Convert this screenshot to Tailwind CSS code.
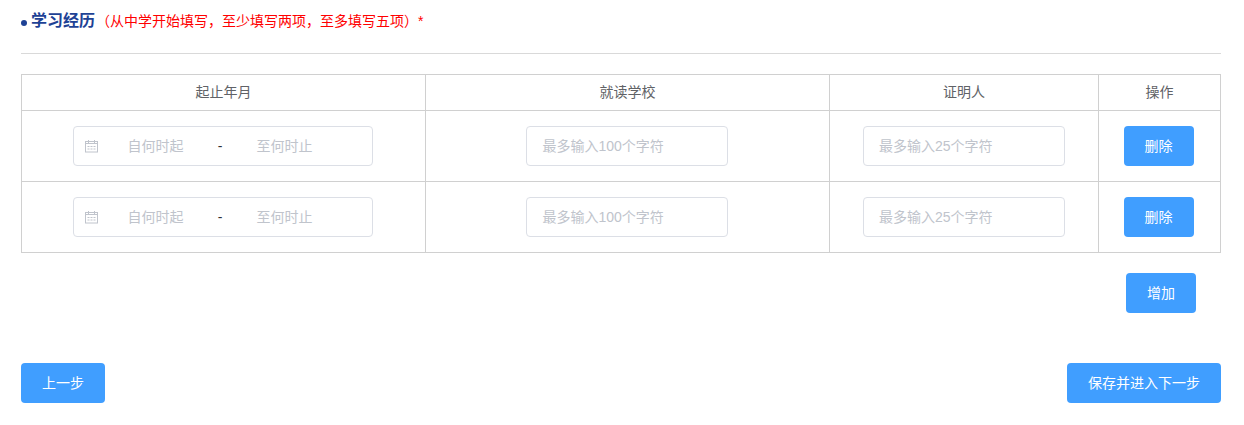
<!DOCTYPE html>
<html lang="zh-CN">
<head>
    <meta charset="UTF-8">
    <meta name="viewport" content="width=device-width, initial-scale=1.0">
    <script src="https://cdn.jsdelivr.net/npm/@tailwindcss/browser@4"></script>
    <title>学习经历</title>
</head>
<body class="bg-white font-['Liberation_Sans','Noto_Sans_CJK_SC',sans-serif] text-[14px] text-[#606266]">
    <div class="w-[1200px] ml-[21px]">
        <!-- 标题 -->
        <div class="h-[54px] border-b border-[#d9d9d9] flex items-start pt-[10px]">
            <span class="w-[6px] h-[6px] rounded-full bg-[#1e4295] mt-[10px] mr-[4px]"></span>
            <h2 class="text-[16px] leading-[22px] font-bold text-[#1e4295]">学习经历</h2>
            <span class="ml-[1px] text-[14px] leading-[22px] text-[#ff0000]">（从中学开始填写，至少填写两项，至多填写五项）*</span>
        </div>

        <!-- 表格 -->
        <table class="mt-[20px] w-[1199px] table-fixed border-collapse text-center">
            <colgroup>
                <col class="w-[404px]">
                <col class="w-[404px]">
                <col class="w-[269px]">
                <col class="w-[122px]">
            </colgroup>
            <thead>
                <tr class="h-[36px]">
                    <th class="border border-[#d0d0d0] font-normal">起止年月</th>
                    <th class="border border-[#d0d0d0] font-normal">就读学校</th>
                    <th class="border border-[#d0d0d0] font-normal">证明人</th>
                    <th class="border border-[#d0d0d0] font-normal">操作</th>
                </tr>
            </thead>
            <tbody>
                <tr class="h-[71px]">
                    <td class="border border-[#d0d0d0] pr-[2px]">
                        <div class="mx-auto w-[300px] h-[40px] border border-[#dcdfe6] rounded flex items-center pl-[11px] text-[#c0c4cc]">
                            <svg class="w-[14px] h-[14px] shrink-0" viewBox="0 0 14 14" fill="none" stroke="#c0c4cc" stroke-width="1">
                                <rect x="0.5" y="2.5" width="12" height="10.5" />
                                <path d="M3.5 1v3M9.5 1v3M0.5 4.5h12" />
                                <path d="M2.5 7.5h8M2.5 10h8" stroke-dasharray="2 1" />
                            </svg>
                            <span class="w-[119px] pr-[5px] text-center">自何时起</span>
                            <span class="w-[5px] text-center text-[#303133]">-</span>
                            <span class="w-[124px] text-center">至何时止</span>
                        </div>
                    </td>
                    <td class="border border-[#d0d0d0] pr-[2px]">
                        <div class="mx-auto w-[202px] h-[40px] border border-[#dcdfe6] rounded flex items-center pl-[16px] text-[#c0c4cc]">最多输入100个字符</div>
                    </td>
                    <td class="border border-[#d0d0d0]">
                        <div class="mx-auto w-[202px] h-[40px] border border-[#dcdfe6] rounded flex items-center px-[15px] text-[#c0c4cc]">最多输入25个字符</div>
                    </td>
                    <td class="border border-[#d0d0d0] pr-[2px]">
                        <button class="w-[70px] h-[40px] rounded bg-[#409eff] text-white">删除</button>
                    </td>
                </tr>
                <tr class="h-[71px]">
                    <td class="border border-[#d0d0d0] pr-[2px]">
                        <div class="mx-auto w-[300px] h-[40px] border border-[#dcdfe6] rounded flex items-center pl-[11px] text-[#c0c4cc]">
                            <svg class="w-[14px] h-[14px] shrink-0" viewBox="0 0 14 14" fill="none" stroke="#c0c4cc" stroke-width="1">
                                <rect x="0.5" y="2.5" width="12" height="10.5" />
                                <path d="M3.5 1v3M9.5 1v3M0.5 4.5h12" />
                                <path d="M2.5 7.5h8M2.5 10h8" stroke-dasharray="2 1" />
                            </svg>
                            <span class="w-[119px] pr-[5px] text-center">自何时起</span>
                            <span class="w-[5px] text-center text-[#303133]">-</span>
                            <span class="w-[124px] text-center">至何时止</span>
                        </div>
                    </td>
                    <td class="border border-[#d0d0d0] pr-[2px]">
                        <div class="mx-auto w-[202px] h-[40px] border border-[#dcdfe6] rounded flex items-center pl-[16px] text-[#c0c4cc]">最多输入100个字符</div>
                    </td>
                    <td class="border border-[#d0d0d0]">
                        <div class="mx-auto w-[202px] h-[40px] border border-[#dcdfe6] rounded flex items-center px-[15px] text-[#c0c4cc]">最多输入25个字符</div>
                    </td>
                    <td class="border border-[#d0d0d0] pr-[2px]">
                        <button class="w-[70px] h-[40px] rounded bg-[#409eff] text-white">删除</button>
                    </td>
                </tr>
            </tbody>
        </table>

        <!-- 增加 -->
        <div class="flex justify-end pr-[25px] mt-[20px]">
            <button class="w-[70px] h-[40px] rounded bg-[#409eff] text-white">增加</button>
        </div>

        <!-- 底部按钮 -->
        <div class="flex justify-between mt-[50px]">
            <button class="w-[84px] h-[40px] rounded bg-[#409eff] text-white">上一步</button>
            <button class="w-[154px] h-[40px] rounded bg-[#409eff] text-white">保存并进入下一步</button>
        </div>
    </div>
</body>
</html>
